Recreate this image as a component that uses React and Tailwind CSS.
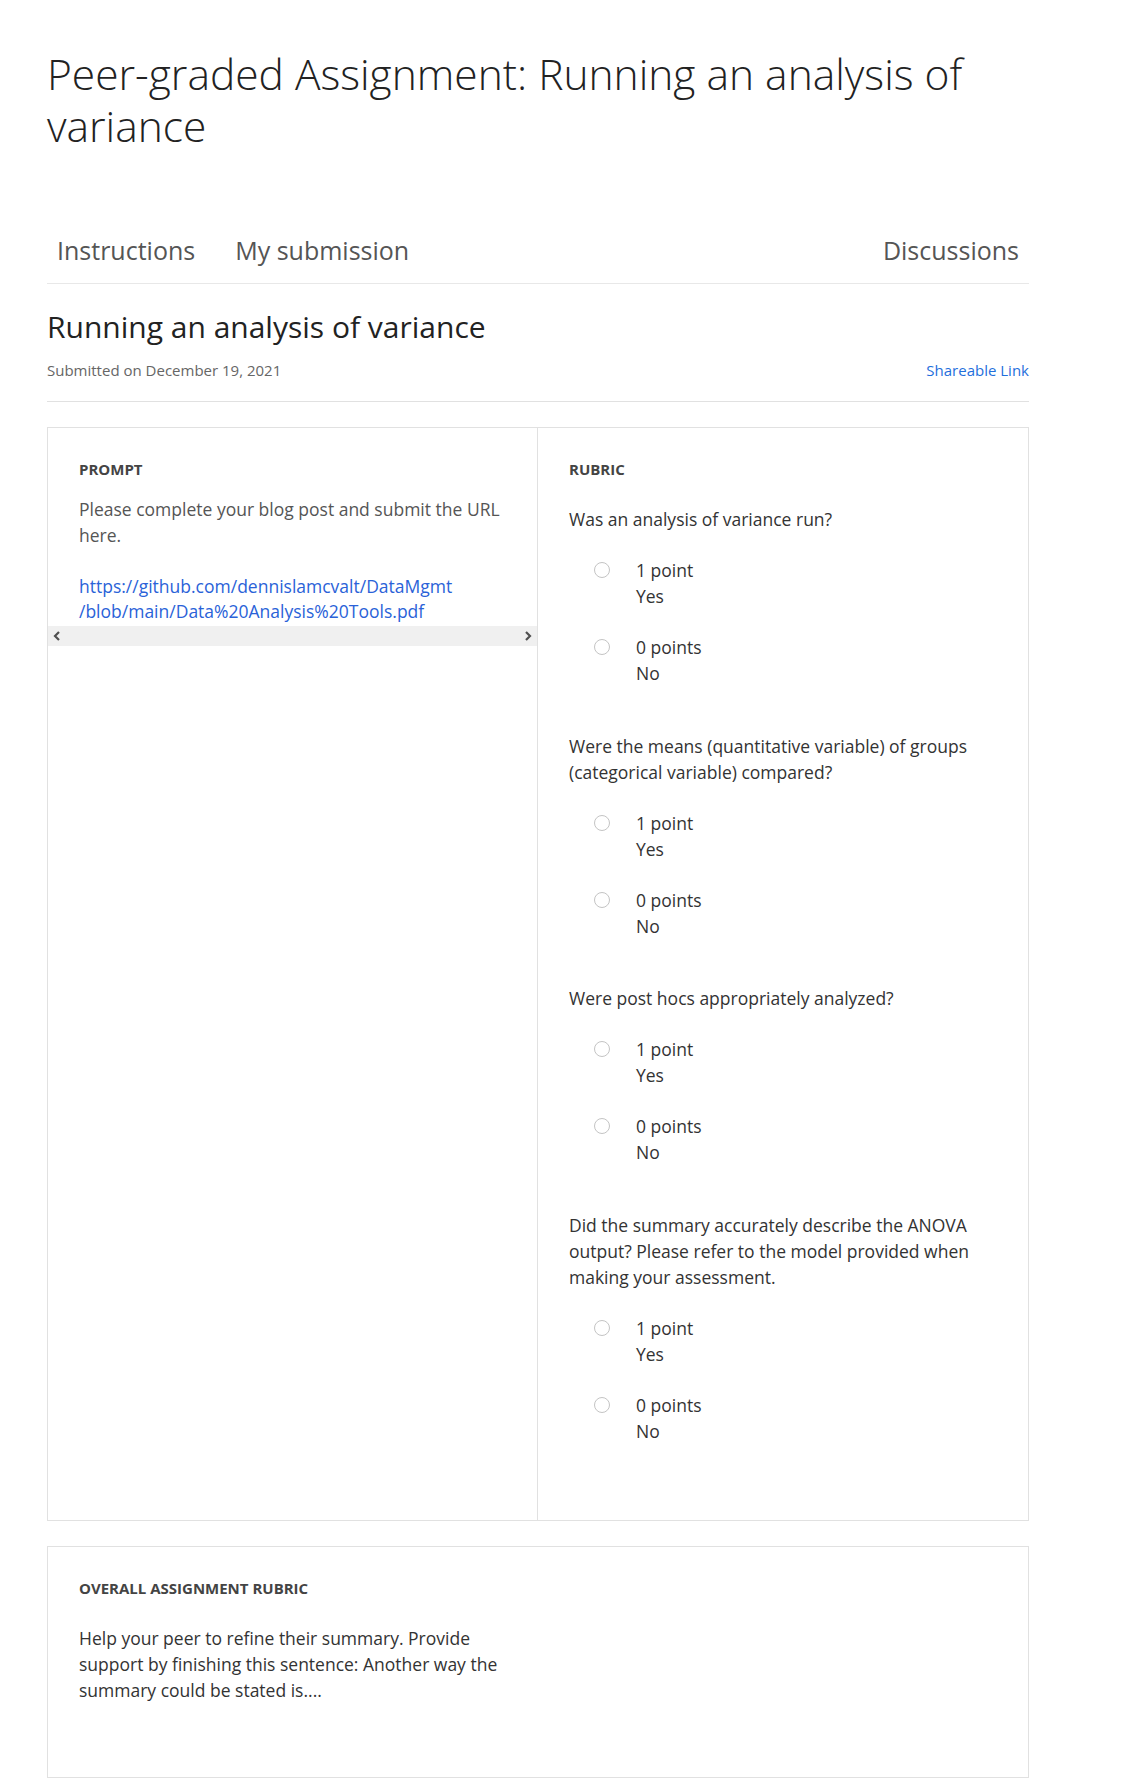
import React from "react";

const questions = [
  "Was an analysis of variance run?",
  "Were the means (quantitative variable) of groups (categorical variable) compared?",
  "Were post hocs appropriately analyzed?",
  "Did the summary accurately describe the ANOVA output? Please refer to the model provided when making your assessment.",
];

const options = [
  { points: "1 point", label: "Yes" },
  { points: "0 points", label: "No" },
];

function Radio() {
  return (
    <span className="mt-[5px] w-4 h-4 rounded-full border-[1.5px] border-[#c4c4c4] bg-white shrink-0"></span>
  );
}

export default function App() {
  return (
    <div className="min-h-screen bg-white font-['Open_Sans',sans-serif]">
      <div className="ml-[47px] w-[982px] pt-[48px] pb-[1px]">
        <h1 className="text-[42.5px] leading-[52px] font-light text-[#222]">
          Peer-graded Assignment: Running an analysis of variance
        </h1>

        {/* tabs */}
        <div className="mt-[81px] flex items-end border-b border-[#e8e8e8]">
          <div className="px-[10px] pb-[16px] text-[25px] leading-[34px] text-[#555]">
            Instructions
          </div>
          <div className="ml-[20px] px-[10px] pb-[16px] text-[25px] leading-[34px] text-[#555]">
            My submission
          </div>
          <div className="ml-auto px-[10px] pb-[16px] text-[25px] leading-[34px] text-[#555]">
            Discussions
          </div>
        </div>

        <h2 className="mt-[25px] text-[30px] leading-[36px] text-[#222]">
          Running an analysis of variance
        </h2>
        <div className="mt-[15px] pb-[21px] flex items-center justify-between border-b border-[#e1e1e1] text-[15px] leading-[20px]">
          <span className="text-[#666]">Submitted on December 19, 2021</span>
          <a className="text-[#1f6fdc]">Shareable Link</a>
        </div>

        {/* prompt + rubric */}
        <div className="mt-[25px] grid grid-cols-2 border border-[#e1e1e1]">
          <div className="border-r border-[#e1e1e1]">
            <div className="px-[31px] pt-[30px]">
              <div className="text-[15px] leading-[22px] font-bold text-[#444]">PROMPT</div>
              <p className="mt-[17px] text-[17.5px] leading-[25.5px] text-[#555]">
                Please complete your blog post and submit the URL here.
              </p>
              <p className="mt-[25.5px] text-[17.5px] leading-[25.5px] text-[#2a62d8]">
                https://github.com/dennislamcvalt/DataMgmt
                <br />
                /blob/main/Data%20Analysis%20Tools.pdf
              </p>
            </div>
            <div className="mt-[1px] h-[20px] bg-[#f0f0f0] flex items-center justify-between px-[3px]">
              <svg width="12" height="12" viewBox="0 0 12 12">
                <path d="M8 2 L4 6 L8 10" fill="none" stroke="#505050" strokeWidth="2.2" />
              </svg>
              <svg width="12" height="12" viewBox="0 0 12 12">
                <path d="M4 2 L8 6 L4 10" fill="none" stroke="#505050" strokeWidth="2.2" />
              </svg>
            </div>
          </div>

          <div className="px-[31px] pt-[30px] pb-[76px]">
            <div className="text-[15px] leading-[22px] font-bold text-[#444]">RUBRIC</div>
            <div className="mt-[26px] flex flex-col gap-[46.5px]">
              {questions.map((q) => (
                <div key={q}>
                  <p className="text-[17.5px] leading-[26px] text-[#333]">{q}</p>
                  <div className="mt-[25px] flex flex-col gap-[25px]">
                    {options.map((o) => (
                      <div key={o.points} className="flex items-start pl-[25px] gap-[26px]">
                        <Radio />
                        <div className="text-[17.5px] leading-[26px] text-[#333]">
                          <div>{o.points}</div>
                          <div>{o.label}</div>
                        </div>
                      </div>
                    ))}
                  </div>
                </div>
              ))}
            </div>
          </div>
        </div>

        {/* overall */}
        <div className="mt-[25px] border border-[#e1e1e1] px-[31px] pt-[30px] pb-[74px]">
          <div className="text-[15px] leading-[22px] font-bold text-[#444]">
            OVERALL ASSIGNMENT RUBRIC
          </div>
          <p className="mt-[26px] w-[429px] text-[17.5px] leading-[26px] text-[#333]">
            Help your peer to refine their summary. Provide support by finishing this sentence: Another way the summary could be stated is....
          </p>
        </div>
      </div>
    </div>
  );
}
